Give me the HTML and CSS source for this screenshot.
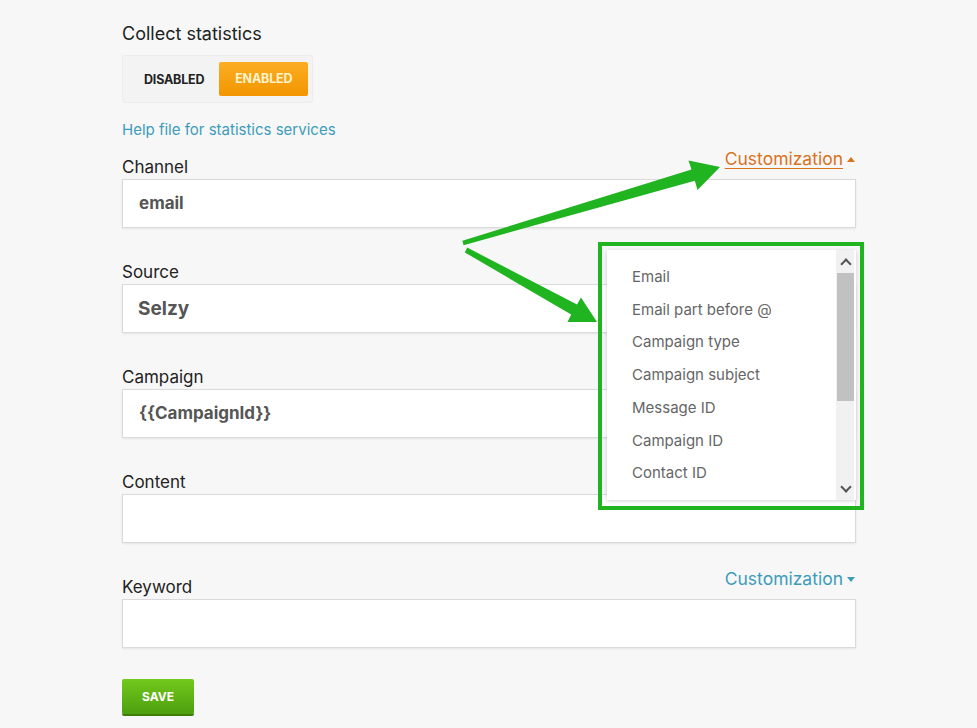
FILE: index.html
```html
<!DOCTYPE html>
<html lang="en">

<head>
    <meta charset="UTF-8">
    <meta name="viewport" content="width=device-width, initial-scale=1.0">
    <title>Statistics settings</title>
    <link rel="stylesheet" href="styles.css">
</head>

<body>
    <div class="page">
        <h3 class="title">Collect statistics</h3>
        <div class="toggle">
            <span class="toggle-off">DISABLED</span>
            <span class="toggle-on">ENABLED</span>
        </div>
        <a class="help" href="#">Help file for statistics services</a>

        <div class="field">
            <div class="field-head">
                <label>Channel</label>
                <a class="custom custom-open" href="#">Customization</a>
            </div>
            <div class="input">email</div>
        </div>
        <div class="field">
            <div class="field-head"><label>Source</label></div>
            <div class="input input-big">Selzy</div>
        </div>
        <div class="field">
            <div class="field-head"><label>Campaign</label></div>
            <div class="input">{{CampaignId}}</div>
        </div>
        <div class="field">
            <div class="field-head"><label>Content</label></div>
            <div class="input"></div>
        </div>
        <div class="field">
            <div class="field-head">
                <label>Keyword</label>
                <a class="custom" href="#">Customization</a>
            </div>
            <div class="input"></div>
        </div>

        <button class="save">SAVE</button>

        <!-- dropdown opened by Customization -->
        <div class="frame"></div>
        <div class="menu">
            <ul class="menu-list">
                <li>Email</li>
                <li>Email part before @</li>
                <li>Campaign type</li>
                <li>Campaign subject</li>
                <li>Message ID</li>
                <li>Campaign ID</li>
                <li>Contact ID</li>
            </ul>
            <div class="scroll">
                <span class="scroll-up"></span>
                <span class="scroll-thumb"></span>
                <span class="scroll-down"></span>
            </div>
        </div>

        <svg class="arrows" width="977" height="728" viewBox="0 0 977 728">
            <polygon fill="#21b421" points="462.4,240.8 691.5,169.4 688.5,160.5 720,167 697.5,190 694.8,180.8 463.6,245.2" />
            <polygon fill="#21b421" points="467.2,247.6 577,304.4 581,297.5 597,322 567.5,322 571.2,314.6 464.8,252.4" />
        </svg>
    </div>
</body>

</html>
```

FILE: styles.css
```css
body {
    margin: 0;
    background: #f7f7f7;
    font-family: Inter, "Liberation Sans", sans-serif;
    color: #222;
}

a {
    text-decoration: none;
}

.page {
    position: relative;
    width: 734px;
    padding: 22px 0 0 122px;
    height: 706px;
}

.title {
    margin: 0;
    font-size: 18px;
    font-weight: normal;
    line-height: 24px;
}

.toggle {
    display: inline-flex;
    align-items: center;
    margin-top: 9px;
    height: 46px;
    padding: 0 4px 0 21px;
    background: #f3f3f3;
    border: 1px solid #ececec;
    border-radius: 3px;
    font-size: 12.5px;
    font-weight: bold;
    letter-spacing: -0.2px;
}

.toggle-off {
    margin-right: 15px;
    color: #222;
}

.toggle-on {
    width: 89px;
    height: 34px;
    line-height: 34px;
    text-align: center;
    color: #fff3cc;
    background: linear-gradient(#fbae22, #f29500);
    border-radius: 2px;
}

.help {
    display: block;
    margin-top: 18px;
    font-size: 15px;
    line-height: 18px;
    color: #3d9cba;
}

.field {
    margin-top: 17px;
}

.field + .field {
    margin-top: 33px;
}

.field-head {
    display: flex;
    justify-content: space-between;
    align-items: flex-end;
    height: 22px;
    margin-bottom: 1px;
}

.field-head label {
    font-size: 17px;
    line-height: 22px;
}

.custom {
    position: relative;
    margin-bottom: 9px;
    padding-right: 13px;
    font-size: 17.5px;
    line-height: 20px;
    color: #3d9cba;
}

.custom::after {
    content: "";
    position: absolute;
    right: 1px;
    top: 8px;
    border-left: 4px solid transparent;
    border-right: 4px solid transparent;
    border-top: 5px solid #3d9cba;
}

.custom-open {
    color: #d8731e;
    text-decoration: underline;
    text-underline-offset: 3px;
}

.custom-open::after {
    border-top: 0;
    border-bottom: 5px solid #d8731e;
}

.input {
    box-sizing: border-box;
    height: 49px;
    padding: 0 16px;
    background: #fff;
    border: 1px solid #dadada;
    box-shadow: 0 1px 2px rgba(0, 0, 0, 0.08);
    font-size: 17px;
    font-weight: bold;
    line-height: 47px;
    color: #555;
}

.input-big {
    padding-left: 15px;
    font-size: 19px;
}

.save {
    display: block;
    margin-top: 31px;
    width: 72px;
    height: 35px;
    padding: 0;
    border: 0;
    border-radius: 2px;
    background: linear-gradient(#72c81c, #4e9f0e);
    box-shadow: 0 2px 0 #3d7e0a;
    font-family: Inter, "Liberation Sans", sans-serif;
    font-size: 12px;
    font-weight: bold;
    color: #fff;
}

/* dropdown + annotation */

.frame {
    position: absolute;
    left: 598px;
    top: 242px;
    width: 258px;
    height: 260px;
    border: 4px solid #21b421;
}

.menu {
    position: absolute;
    left: 607px;
    top: 250px;
    width: 249px;
    height: 250px;
    background: #fff;
    box-shadow: 0 1px 4px rgba(0, 0, 0, 0.18);
    overflow: hidden;
}

.menu-list {
    margin: 0;
    padding: 11px 0 0 25px;
    list-style: none;
}

.menu-list li {
    font-size: 15px;
    line-height: 32.7px;
    color: #666;
}

.scroll {
    position: absolute;
    right: 2px;
    top: 0;
    width: 18px;
    height: 250px;
    background: #f1f1f1;
}

.scroll-thumb {
    position: absolute;
    left: 1px;
    top: 23px;
    width: 17px;
    height: 128px;
    background: #c1c1c1;
}

.scroll-up,
.scroll-down {
    position: absolute;
    left: 6px;
    width: 6px;
    height: 6px;
    border-left: 2px solid #555;
    border-top: 2px solid #555;
}

.scroll-up {
    top: 10px;
    transform: rotate(45deg);
}

.scroll-down {
    top: 233px;
    transform: rotate(225deg);
}

.arrows {
    position: absolute;
    left: 0;
    top: 0;
    pointer-events: none;
}
```
